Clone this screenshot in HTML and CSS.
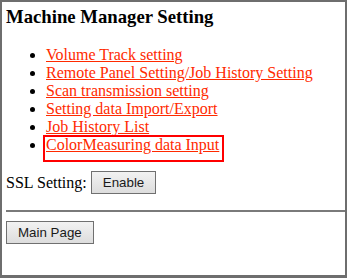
FILE: index.html
```html
<!DOCTYPE html>
<html lang="en">
<head>
    <meta charset="UTF-8">
    <title>Machine Manager Setting</title>
    <link rel="stylesheet" href="styles.css">
</head>
<body>
    <div class="frame">
        <h3 class="page-title">Machine Manager Setting</h3>

        <ul class="menu-list">
            <li><a href="#">Volume Track setting</a></li>
            <li><a href="#">Remote Panel Setting/Job History Setting</a></li>
            <li><a href="#">Scan transmission setting</a></li>
            <li><a href="#">Setting data Import/Export</a></li>
            <li><a href="#">Job History List</a></li>
            <li><a href="#" class="selected">ColorMeasuring data Input</a></li>
        </ul>

        <div class="ssl-row">
            SSL Setting: <button class="button">Enable</button>
        </div>

        <hr class="divider">

        <button class="button">Main Page</button>
    </div>
</body>
</html>
```

FILE: styles.css
```css
html, body {
    margin: 0;
    height: 100%;
}

body {
    font-family: 'Liberation Serif', serif;
    font-size: 16px;
    color: #000;
    background: #fff;
}

.frame {
    box-sizing: border-box;
    height: 100%;
    border: 2px solid #6e6e6e;
    border-bottom-width: 3px;
    padding: 4px 0 0 4px;
}

.page-title {
    font-size: 18.72px;
    margin: 0 0 18px;
}

.menu-list {
    margin: 0 0 17px;
    padding-left: 40px;
}

.menu-list a {
    color: #ff2a00;
}

/* highlight box around the current item */
.menu-list a.selected {
    position: relative;
}

.menu-list a.selected::after {
    content: '';
    position: absolute;
    left: -3px;
    right: -5px;
    top: -1px;
    bottom: -9px;
    border: 2px solid #ff0000;
}

.ssl-row {
    display: flex;
    align-items: center;
    gap: 4px;
}

.divider {
    margin: 16px 0 9px;
    border: none;
    border-top: 2px solid #7a7a7a;
}

.button {
    font-family: 'Liberation Sans', Arial, sans-serif;
    font-size: 13.33px;
    line-height: 16px;
    color: #1a1a1a;
    padding: 3px 11px 2px;
    border: 1px solid #707070;
    border-radius: 0;
    background: linear-gradient(#f2f2f2, #dddddd);
}
```
